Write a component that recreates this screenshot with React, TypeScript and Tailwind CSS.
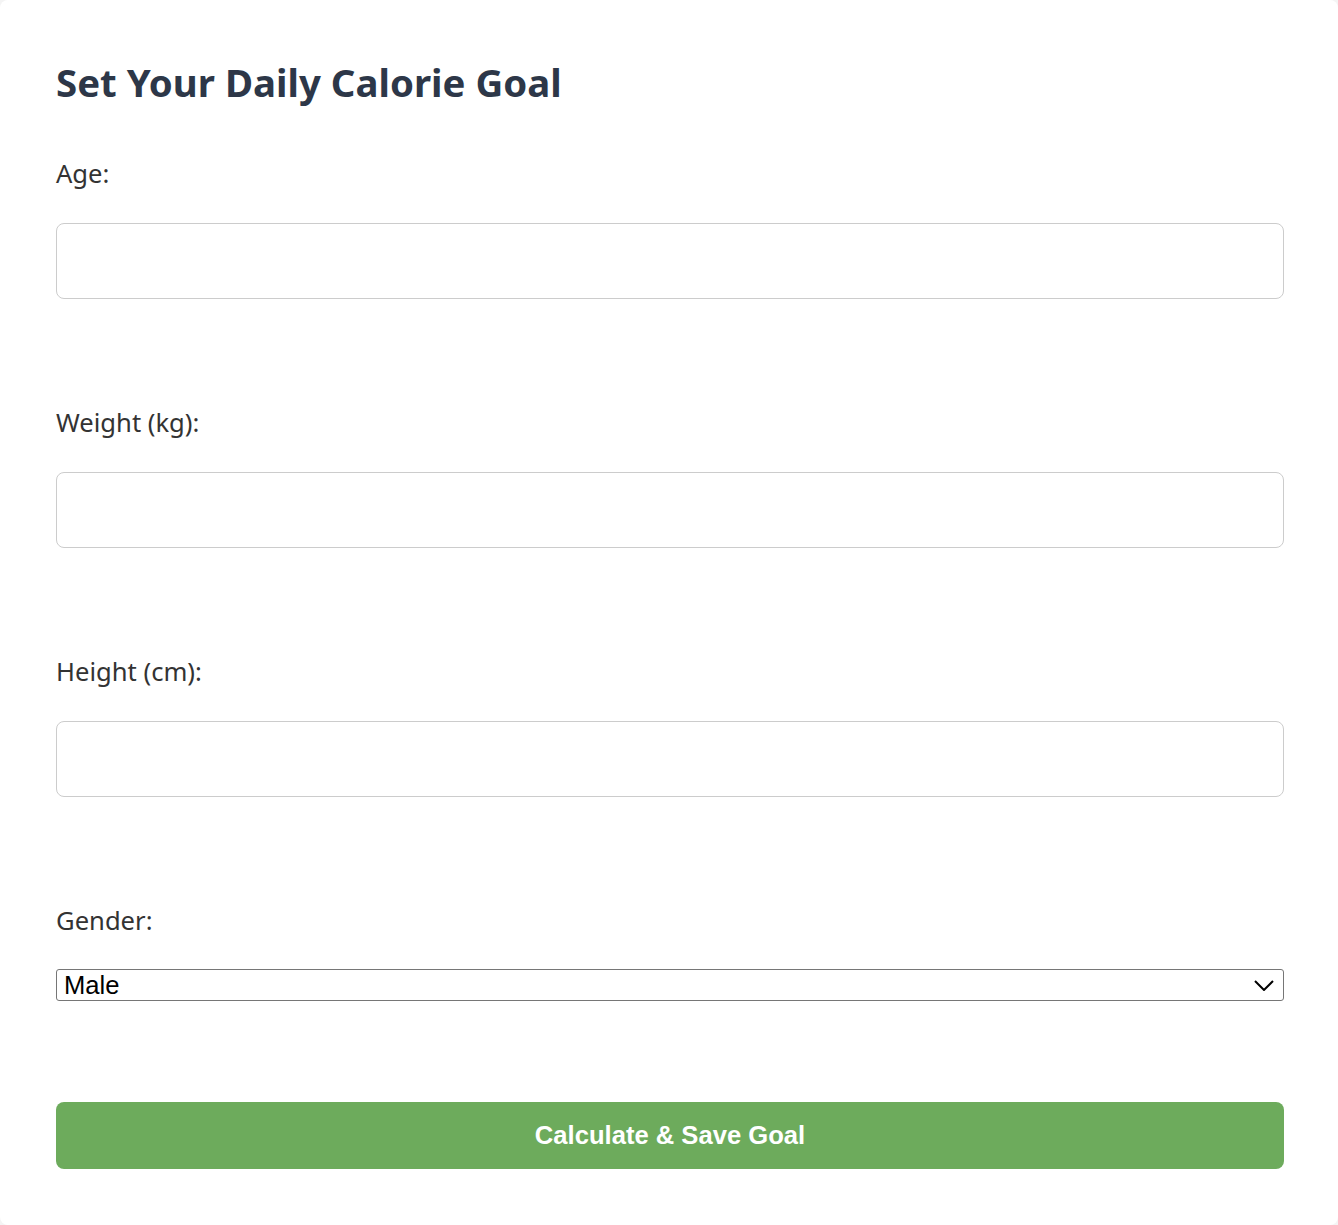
import React, { useState } from 'react';

function Field({ label }: { label: string }) {
  return (
    <div className="mb-[106px]">
      <label className="block text-[25.6px] leading-[36px] text-[#333333]">{label}</label>
      <input
        type="number"
        className="mt-[31px] block h-[76px] w-full rounded-lg border border-[#cccccc] bg-white px-4 text-[25.6px] outline-none"
      />
    </div>
  );
}

export default function App() {
  const [gender, setGender] = useState('male');

  return (
    <div className="min-h-screen bg-[#f4f4f4]" style={{ fontFamily: '"Noto Sans", "Open Sans", sans-serif' }}>
      <div className="rounded-lg bg-white py-14 pl-14 pr-[54px]">
        <h1 className="mb-[48px] text-[38.4px] font-bold leading-[52px] text-[#2d3748]">
          Set Your Daily Calorie Goal
        </h1>

        <Field label="Age:" />
        <Field label="Weight (kg):" />
        <Field label="Height (cm):" />

        <div>
          <label className="block text-[25.6px] leading-[36px] text-[#333333]">Gender:</label>
          <div className="relative mt-[30px]">
            <select
              value={gender}
              onChange={(e) => setGender(e.target.value)}
              className="block h-[32px] w-full appearance-none rounded-[3px] border border-[#767676] bg-white pl-[7px] text-[25.6px] leading-[30px] text-black outline-none"
              style={{ fontFamily: '"Liberation Sans", Arial, sans-serif' }}
            >
              <option value="male">Male</option>
              <option value="female">Female</option>
            </select>
            <svg
              className="pointer-events-none absolute right-[10px] top-[11px]"
              width="20"
              height="11"
              viewBox="0 0 20 11"
              fill="none"
            >
              <path d="M1 1l9 9 9-9" stroke="#000" strokeWidth="2" />
            </svg>
          </div>
        </div>

        <button
          className="mt-[101px] block h-[67px] w-full rounded-lg bg-[#6dab5c] text-[25.6px] font-bold text-white"
          style={{ fontFamily: '"Liberation Sans", Arial, sans-serif' }}
        >
          Calculate &amp; Save Goal
        </button>
      </div>
    </div>
  );
}
